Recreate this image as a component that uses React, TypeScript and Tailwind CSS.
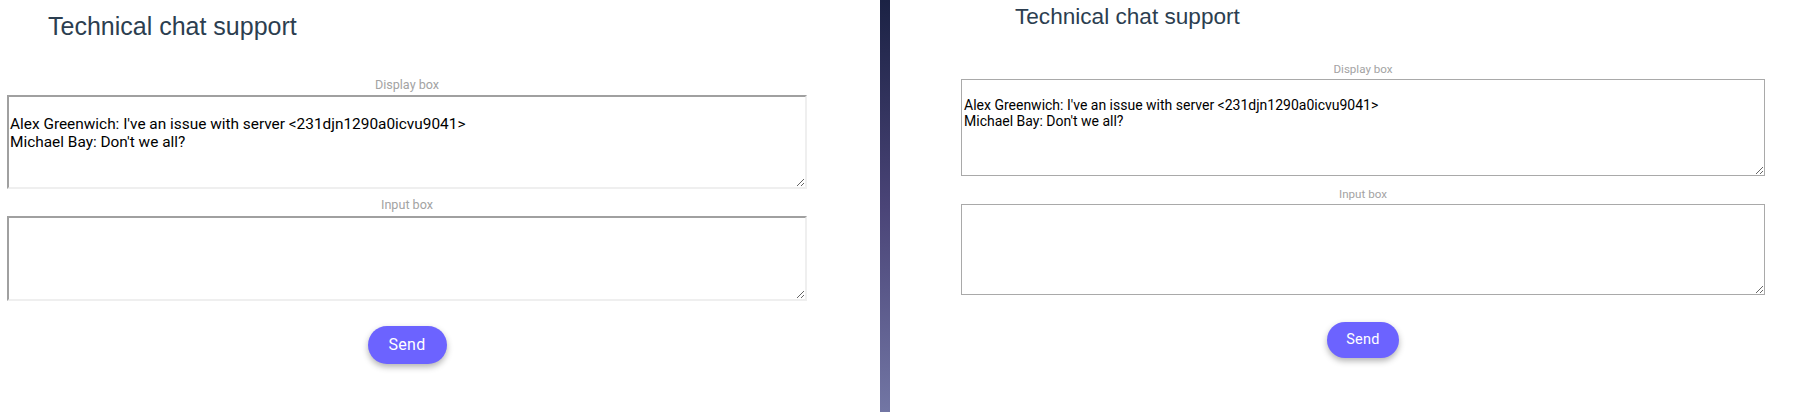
import React from "react";

const chatLog = "\nAlex Greenwich: I've an issue with server <231djn1290a0icvu9041>\nMichael Bay: Don't we all?";

export default function App() {
  return (
    <div className="flex h-[412px] w-[1804px] bg-white overflow-hidden">
      {/* left window */}
      <div className="w-[880px] shrink-0 flex flex-col">
        <h1 className="mt-[12px] pl-[48px] text-[25px] leading-[29px] font-normal text-[#2c3e50] font-['Liberation_Sans',Arial,sans-serif]">
          Technical chat support
        </h1>
        <div className="ml-[7px] w-[800px] flex flex-col items-center font-['Roboto',sans-serif]">
          <div className="mt-[36px] text-[12.6px] leading-[15px] text-[#a3a3a3]">Display box</div>
          <textarea
            readOnly
            value={chatLog}
            className="mt-[3px] w-[800px] h-[94px] border-2 border-t-[#a0a0a0] border-l-[#a0a0a0] border-r-[#efefef] border-b-[#efefef] pl-[1px] text-[15.4px] leading-[18px] text-black outline-none"
          />
          <div className="mt-[8px] text-[12.6px] leading-[15px] text-[#a3a3a3]">Input box</div>
          <textarea
            className="mt-[4px] w-[800px] h-[85px] border-2 border-t-[#a0a0a0] border-l-[#a0a0a0] border-r-[#efefef] border-b-[#efefef] text-[15px] outline-none"
          />
          <button className="mt-[25px] w-[79px] h-[38px] rounded-full bg-[#6c63ff] text-white text-[16px] tracking-[0.3px] shadow-[0_3px_6px_rgba(0,0,0,0.3)]">
            Send
          </button>
        </div>
      </div>

      {/* desktop wallpaper strip between windows */}
      <div className="w-[10px] shrink-0 bg-gradient-to-b from-[#1b2244] via-[#4a4477] to-[#7276a4]" />

      {/* right window */}
      <div className="flex-1 flex flex-col">
        <h1 className="mt-[4px] pl-[125px] text-[22.6px] leading-[26px] font-normal text-[#2c3e50] font-['Liberation_Sans',Arial,sans-serif]">
          Technical chat support
        </h1>
        <div className="ml-[71px] w-[804px] flex flex-col items-center font-['Roboto',sans-serif]">
          <div className="mt-[32px] text-[11.6px] leading-[14px] text-[#a3a3a3]">Display box</div>
          <textarea
            readOnly
            value={chatLog}
            className="mt-[3px] w-[804px] h-[97px] border border-[#a9a9a9] px-[2px] pt-[1px] text-[14px] leading-[16px] text-black outline-none"
          />
          <div className="mt-[11px] text-[11.6px] leading-[14px] text-[#a3a3a3]">Input box</div>
          <textarea className="mt-[3px] w-[804px] h-[91px] border border-[#a9a9a9] text-[14px] outline-none" />
          <button className="mt-[27px] w-[72px] h-[36px] rounded-full bg-[#6c63ff] text-white text-[14.5px] tracking-[0.3px] shadow-[0_3px_6px_rgba(0,0,0,0.3)]">
            Send
          </button>
        </div>
      </div>
    </div>
  );
}
